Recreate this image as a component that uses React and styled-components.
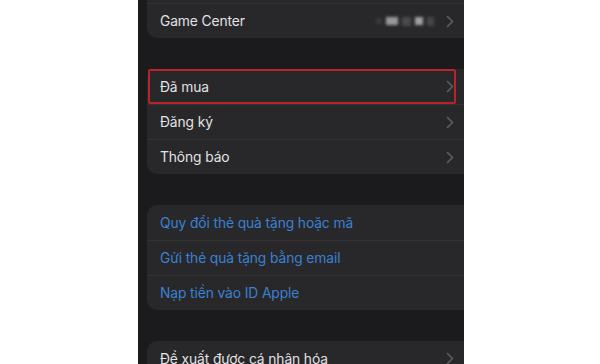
import React from 'react';
import styled, { createGlobalStyle } from 'styled-components';

const GlobalStyle = createGlobalStyle`
  html, body {
    margin: 0;
    padding: 0;
    background: #ffffff;
  }
  body {
    font-family: Inter, "Noto Sans", "Liberation Sans", sans-serif;
  }
`;

const Page = styled.div`
  width: 600px;
  height: 364px;
  display: flex;
  background: #ffffff;
`;

const Phone = styled.div`
  margin-left: 138px;
  width: 326px;
  height: 364px;
  background: #1b1b1d;
  overflow: hidden;
  display: flex;
  flex-direction: column;
  gap: 31px;
  padding-left: 9px;
  box-sizing: border-box;
`;

const Card = styled.div`
  background: #28282a;
  border-radius: 10px;
  margin-right: -12px;
  margin-top: ${props => props.$offset || 0}px;
  display: flex;
  flex-direction: column;
  flex-shrink: 0;
`;

const Row = styled.div`
  position: relative;
  box-sizing: border-box;
  height: 35px;
  flex-shrink: 0;
  display: flex;
  align-items: center;
  padding-left: 13px;
  padding-right: 22px;
  font-size: 13.8px;
  color: ${props => (props.$link ? '#3b80d2' : '#e2e2e4')};
  letter-spacing: -0.1px;
  & + & {
    border-top: 1px solid #343436;
  }
  border-top: ${props => (props.$topLine ? '1px solid #343436' : 'none')};
`;

const Label = styled.span`
  flex: 1;
  white-space: nowrap;
`;

const Redacted = styled.div`
  display: flex;
  align-items: center;
  gap: 4px;
  margin-right: 12px;
  filter: blur(1.5px);
`;

const Blob = styled.span`
  width: ${props => props.$w}px;
  height: ${props => props.$h}px;
  background: ${props => props.$c};
`;

const Highlight = styled.div`
  position: absolute;
  left: 1px;
  right: 20px;
  top: 0;
  bottom: 0;
  border: 2px solid #b9232b;
  border-radius: 2px;
  pointer-events: none;
`;

const Chevron = () => (
  <svg width="8" height="13" viewBox="0 0 8 13" fill="none">
    <path d="M1.5 1.5L6.5 6.5L1.5 11.5" stroke="#5e5e62" strokeWidth="1.6" strokeLinecap="round" strokeLinejoin="round" />
  </svg>
);

const App = () => {
  return (
    <>
      <GlobalStyle />
      <Page>
        <Phone>
          <Card $offset={-8}>
            <Row $topLine style={{ height: '11px' }} />
            <Row>
              <Label>Game Center</Label>
              <Redacted>
                <Blob $w={6} $h={6} $c="#3a3a3c" />
                <Blob $w={12} $h={8} $c="#9a9a9c" />
                <Blob $w={9} $h={9} $c="#4a4a4c" />
                <Blob $w={8} $h={8} $c="#a2a2a4" />
                <Blob $w={7} $h={9} $c="#46464a" />
              </Redacted>
              <Chevron />
            </Row>
          </Card>

          <Card>
            <Row>
              <Label>Đã mua</Label>
              <Chevron />
              <Highlight />
            </Row>
            <Row>
              <Label>Đăng ký</Label>
              <Chevron />
            </Row>
            <Row>
              <Label>Thông báo</Label>
              <Chevron />
            </Row>
          </Card>

          <Card>
            <Row $link>
              <Label>Quy đổi thẻ quà tặng hoặc mã</Label>
            </Row>
            <Row $link>
              <Label>Gửi thẻ quà tặng bằng email</Label>
            </Row>
            <Row $link>
              <Label>Nạp tiền vào ID Apple</Label>
            </Row>
          </Card>

          <Card>
            <Row>
              <Label>Đề xuất được cá nhân hóa</Label>
              <Chevron />
            </Row>
          </Card>
        </Phone>
      </Page>
    </>
  );
};

export default App;
